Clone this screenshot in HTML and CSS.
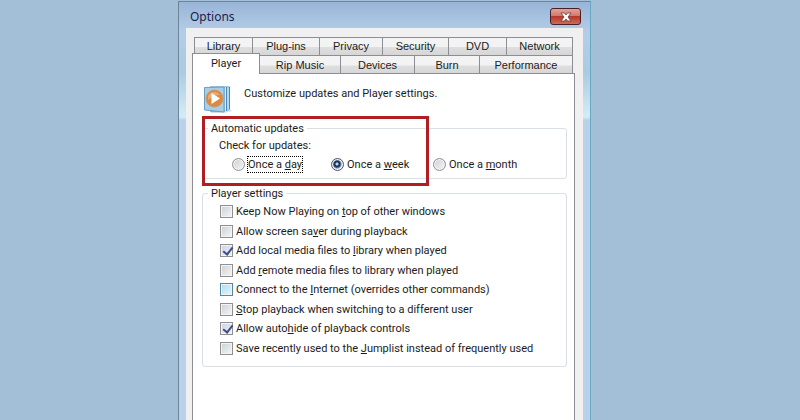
FILE: index.html
```html
<!DOCTYPE html>
<html lang="en">
<head>
<meta charset="utf-8">
<title>Options</title>
<link rel="stylesheet" href="styles.css">
</head>
<body>
<main class="window">
  <header class="titlebar">
    <h1 class="title">Options</h1>
    <button class="close" type="button" aria-label="Close">
      <svg width="12" height="10" viewBox="0 0 12 10"><path d="M1 1H4.500L6 3L7.500 1H11L8 5L11 9H7.500L6 7L4.500 9H1L4 5Z" fill="#fff" stroke="#6b3a3c" stroke-width=".8"/></svg>
    </button>
  </header>
  <div class="client">
    <nav class="tabs">
      <div class="tab-row back-row">
        <button class="tab" type="button">Library</button>
        <button class="tab" type="button">Plug-ins</button>
        <button class="tab" type="button">Privacy</button>
        <button class="tab" type="button">Security</button>
        <button class="tab" type="button">DVD</button>
        <button class="tab" type="button">Network</button>
      </div>
      <div class="tab-row front-row">
        <button class="tab active" type="button">Player</button>
        <button class="tab" type="button">Rip Music</button>
        <button class="tab" type="button">Devices</button>
        <button class="tab" type="button">Burn</button>
        <button class="tab" type="button">Performance</button>
      </div>
    </nav>
    <section class="panel">
      <div class="intro">
        <svg class="logo" width="28" height="27" viewBox="0 0 28 27">
          <path d="M7 25L26 23L28 25L20 27H7Z" fill="#d4dce4"/>
          <path d="M6 1H25.500V23L20 25H6Z" fill="#8fc6e6" stroke="#4b86b4"/>
          <path d="M21.500 1V25M24 1V24" stroke="#d5effb"/>
          <path d="M22.500 1V25" stroke="#4b86b4"/>
          <path d="M.5 1.500L20 1V26L.5 24Z" fill="#a5cfe9" stroke="#6a9fc5"/>
          <circle cx="10.500" cy="12.500" r="8.500" fill="#dc8a3e" stroke="#c9996d"/>
          <path d="M4 10A7 7 0 0 1 16 9Q10 9 4 14Z" fill="#e9ad74"/>
          <path d="M7.500 7L16 12.500L7.500 18Z" fill="#fff"/>
        </svg>
        <p class="intro-text">Customize updates and Player settings.</p>
      </div>
      <fieldset class="group updates">
        <legend>Automatic updates</legend>
        <p class="prompt">Check for updates:</p>
        <div class="radios">
          <label class="option"><input type="radio" name="check"><span class="focus">Once a <u>d</u>ay</span></label>
          <label class="option"><input type="radio" name="check" checked><span>Once a <u>w</u>eek</span></label>
          <label class="option"><input type="radio" name="check"><span>Once a <u>m</u>onth</span></label>
        </div>
      </fieldset>
      <fieldset class="group settings">
        <legend>Player settings</legend>
        <div class="checks">
          <label class="option"><input type="checkbox"><span>Keep Now Playing on <u>t</u>op of other windows</span></label>
          <label class="option"><input type="checkbox"><span>Allow screen sa<u>v</u>er during playback</span></label>
          <label class="option"><input type="checkbox" checked><span>Add local media files to <u>l</u>ibrary when played</span></label>
          <label class="option"><input type="checkbox"><span>Add <u>r</u>emote media files to library when played</span></label>
          <label class="option"><input class="hot" type="checkbox"><span>Connect to the <u>I</u>nternet (overrides other commands)</span></label>
          <label class="option"><input type="checkbox"><span><u>S</u>top playback when switching to a different user</span></label>
          <label class="option"><input type="checkbox" checked><span>Allow auto<u>h</u>ide of playback controls</span></label>
          <label class="option"><input type="checkbox"><span>Save recently used to the <u>J</u>umplist instead of frequently used</span></label>
        </div>
      </fieldset>
      <div class="highlight"></div>
    </section>
  </div>
</main>
</body>
</html>
```
FILE: styles.css
```css
* {
  box-sizing: border-box;
}

body {
  margin: 0;
  padding: 1px 209px 0 178px;
  background: #a3bfd8;
  color: #1c1c1c;
  font: 11px/15px Roboto, Tahoma, sans-serif;
}

h1,
p {
  margin: 0;
  font-size: inherit;
  font-weight: normal;
}

button,
input {
  margin: 0;
  font: inherit;
  color: inherit;
}

.window {
  display: flex;
  flex-direction: column;
  min-height: calc(100vh - 1px);
  padding: 0 7px;
  border: 1px solid #6f8596;
  border-right-color: #6aa9c6;
  border-bottom: 0;
  background: linear-gradient(#98b5d6, #b4cde8 30px, #a9cbe2 70px, #d5ecf6 115px, #b9d1ea 118px);
}

.titlebar {
  display: flex;
  justify-content: space-between;
  height: 26px;
  padding: 6px 2px 0 4px;
}

.title {
  font-family: "Noto Sans", "Segoe UI", sans-serif;
  font-size: 12px;
  line-height: 18px;
  color: #1c1c4c;
}

.close {
  display: flex;
  align-items: center;
  justify-content: center;
  width: 31px;
  height: 17px;
  padding: 0;
  border: 1px solid #4a2028;
  border-radius: 3px;
  background: linear-gradient(#e3a398, #d07a6c 45%, #b5382a 50%, #cf6b55);
}

.client {
  display: flex;
  flex: 1;
  flex-direction: column;
  padding: 9px 8px 0 6px;
  background: #f0f0f0;
}

.tab-row {
  display: grid;
  height: 18px;
}

.back-row {
  grid-template-columns: 59fr 67fr 63fr 66fr 58fr 66fr;
  padding: 0 2px;
}

.front-row {
  grid-template-columns: 68fr 81fr 74fr 65fr 93fr;
  padding-right: 2px;
}

.tab {
  padding: 0;
  border: 1px solid #8c8e94;
  border-width: 1px 1px 0 1px;
  background: linear-gradient(#f3f3f3 50%, #dfdfdf 55%, #d6d6d6);
  font-family: "Liberation Sans", Arial, sans-serif;
}

.tab + .tab {
  border-left: 0;
}

.active {
  height: 21px;
  margin-top: -2px;
  padding-bottom: 1px;
  background: #fff;
  font-family: inherit;
  z-index: 1;
}

.panel {
  position: relative;
  flex: 1;
  padding: 12px 7px 0 9px;
  border: 1px solid #8c8e94;
  border-bottom: 0;
  background: #fff;
}

.intro {
  display: flex;
  gap: 12px;
  height: 35px;
  padding-left: 2px;
}

.group {
  min-width: 0;
  margin: 0;
  padding: 0 8px;
  border: 1px solid #d9dfe3;
  border-radius: 3px;
}

.group legend {
  margin-left: -3px;
  padding: 0 3px;
}

.updates {
  height: 58px;
}

.settings {
  height: 181px;
  margin-top: 7px;
}

.prompt {
  padding: 2px 0 0 8px;
}

.radios {
  display: grid;
  grid-template-columns: 99px 102px 1fr;
  padding: 4px 0 0 21px;
}

.option {
  display: flex;
  align-items: center;
  gap: 3px;
  height: 15px;
  white-space: nowrap;
}

.focus {
  outline: 1px dotted #000;
}

.checks {
  display: flex;
  flex-direction: column;
  justify-content: space-between;
  height: 155px;
  padding: 3px 0 0 9px;
}

input {
  flex: none;
  width: 13px;
  height: 13px;
  appearance: none;
  border: 1px solid #8e8f8f;
  box-shadow: inset 0 0 0 1px #f4f4f4;
  background: linear-gradient(135deg, #cbcfd5, #f6f6f6);
}

input[type="radio"] {
  border-radius: 50%;
}

input[type="radio"]:checked {
  border-color: #47566f;
  background: radial-gradient(circle at 5px 5px, #b9d4ee 0 1px, #1c355e 2px 3px, #d7dfe9 5px);
}

input[type="checkbox"]:checked {
  background: linear-gradient(135deg, #cbcfe5, #f2f4fa);
}

input[type="checkbox"]:checked::before {
  content: "";
  display: block;
  width: 4px;
  height: 8px;
  margin: 0 0 0 4px;
  border: solid #3f4d85;
  border-width: 0 2px 2px 0;
  transform: rotate(38deg);
}

input.hot {
  border-color: #5586a3;
  background: linear-gradient(135deg, #a9dcf0, #e6f8fd);
}

.highlight {
  position: absolute;
  top: 42px;
  left: 9px;
  width: 227px;
  height: 70px;
  border: 3px solid #b01e23;
  pointer-events: none;
}
```
